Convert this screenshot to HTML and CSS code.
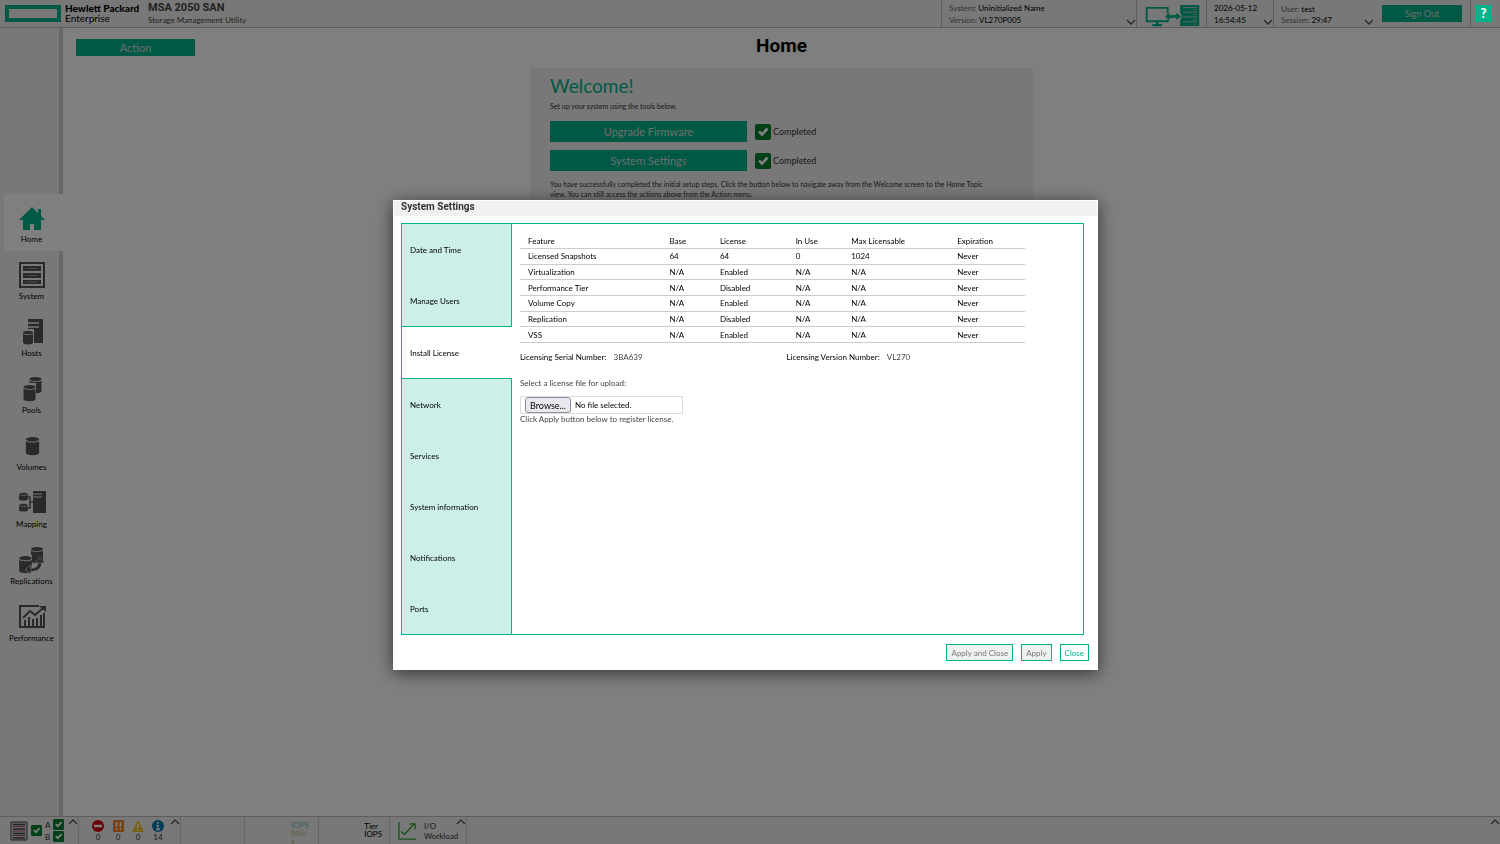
FILE: index.html
```
<!DOCTYPE html>
<html lang="en">

<head>
    <meta charset="UTF-8">
    <meta name="viewport" content="width=device-width, initial-scale=1.0">
    <title>MSA 2050 SAN - Storage Management Utility</title>
    <link rel="stylesheet" href="styles.css">
</head>

<body>
    <!-- shared icons -->
    <svg class="sprite" aria-hidden="true">
        <symbol id="check" viewBox="0 0 16 16">
            <rect width="16" height="16" rx="2" fill="#007f2e" />
            <path d="M4 7.500l3 3 5.500-6" fill="none" stroke="#fff" stroke-width="2.600" />
        </symbol>
        <symbol id="chev-down" viewBox="0 0 10 6">
            <path d="M1 1l4 4 4-4" fill="none" stroke="#555" stroke-width="1.400" />
        </symbol>
        <symbol id="chev-up" viewBox="0 0 10 6">
            <path d="M1 5l4-4 4 4" fill="none" stroke="#555" stroke-width="1.400" />
        </symbol>
        <symbol id="disk" viewBox="0 0 14 18">
            <path d="M1 4v11c0 3 12 3 12 0V4c0 2.500-12 2.500-12 0z" />
            <ellipse cx="7" cy="3" rx="6" ry="2" />
        </symbol>
    </svg>

    <header class="header">
        <svg class="logo" viewBox="0 0 56 17" aria-hidden="true">
            <rect x="2" y="2" width="52" height="13" fill="none" stroke="#00b388" stroke-width="4" />
        </svg>
        <div class="brand"><b>Hewlett Packard</b><span>Enterprise</span></div>
        <div class="product"><b>MSA 2050 SAN</b><span>Storage Management Utility</span></div>

        <div class="cell cell-system">
            <div class="line"><span>System:</span> Uninitialized Name</div>
            <div class="line"><span>Version:</span> VL270P005</div>
            <button class="chev" aria-label="System menu"><svg><use href="#chev-down" /></svg></button>
        </div>
        <div class="cell cell-link">
            <svg class="link-icon" viewBox="0 0 56 23" fill="none" stroke="#00b388">
                <path d="M1 3h22v14H1z" stroke-width="2" />
                <path d="M12 17v4M7 21h10" stroke-width="2.500" />
                <path d="M18 12h20" stroke="#f0f0f0" stroke-width="6" />
                <path d="M22 12h12" stroke-width="3" />
                <path d="M25 8l-5 4 5 4zM32 8l5 4-5 4z" fill="#00b388" stroke="none" />
                <path d="M36 0h20v22H36V16l2-4-2-4z" fill="#00b388" stroke="none" />
                <path d="M39 2.500h15M39 7.500h15M39 12.500h15M39 17.500h15" stroke="#c8c8c8" stroke-width="1" />
                <path d="M50 5h3M50 10h3M50 15h3M50 20h3" stroke="#c8c8c8" stroke-width="1" />
            </svg>
        </div>
        <div class="cell cell-time">
            <div class="line">2026-05-12</div>
            <div class="line">16:54:45</div>
            <button class="chev" aria-label="Date and time menu"><svg><use href="#chev-down" /></svg></button>
        </div>
        <div class="cell cell-user">
            <div class="user">
                <div class="line"><span>User:</span> test</div>
                <div class="line"><span>Session:</span> 29:47</div>
                <button class="chev" aria-label="User menu"><svg><use href="#chev-down" /></svg></button>
            </div>
            <button class="btn-sign-out">Sign Out</button>
        </div>
        <div class="cell cell-help"><button class="btn-help" aria-label="Help">?</button></div>
    </header>

    <div class="page">
        <nav class="sidebar">
            <a href="#home" class="active">
                <svg viewBox="0 0 28 28" class="home-icon"><path d="M14 3L1 16h4v10h7v-6h4v6h7V16h4l-4-4V5h-3v4z" /></svg>
                Home
            </a>
            <a href="#system">
                <svg viewBox="0 0 28 28">
                    <path d="M2 2h24v24H2z" fill="none" stroke="#555" stroke-width="2" />
                    <path d="M5 5h18v5H5zM5 12h18v5H5zM5 19h18v4H5z" />
                    <path d="M7 7.500h1M7 14.500h1M7 21h1M10 7.500h9M10 14.500h9M10 21h9" stroke="#999" />
                </svg>
                System
            </a>
            <a href="#hosts">
                <svg viewBox="0 0 28 28">
                    <path d="M10 1h15v24H10z" />
                    <path d="M10 5h11M10 9h11" stroke="#f0f0f0" stroke-width="1.500" />
                    <path d="M3 11h13v17H3z" fill="#f0f0f0" />
                    <use href="#disk" x="4" y="12" width="12" height="15" />
                </svg>
                Hosts
            </a>
            <a href="#pools">
                <svg viewBox="0 0 28 28">
                    <use href="#disk" x="10" y="1" width="15" height="18" />
                    <path d="M4 8h14v19H4z" fill="#f0f0f0" />
                    <use href="#disk" x="4" y="9" width="15" height="18" />
                </svg>
                Pools
            </a>
            <a href="#volumes">
                <svg viewBox="0 0 28 28"><use href="#disk" x="6" y="4" width="17" height="20" /></svg>
                Volumes
            </a>
            <a href="#mapping">
                <svg viewBox="0 0 28 28">
                    <path d="M1 5v5c0 2 9 2 9 0V5M1 16v5c0 2 9 2 9 0v-5" />
                    <path d="M1 5c0 2 9 2 9 0s-9-2-9 0zM1 16c0 2 9 2 9 0s-9-2-9 0z" stroke="#f0f0f0" stroke-width=".6" />
                    <path d="M15 2h13v22H15z" />
                    <path d="M15 5h9M15 8h9" stroke="#f0f0f0" />
                    <path d="M10 8h2v11h-2M12 13h4" fill="none" stroke="#555" stroke-width="1.500" />
                </svg>
                Mapping
            </a>
            <a href="#replications">
                <svg viewBox="0 0 28 28">
                    <use href="#disk" x="11" y="0" width="16" height="18" />
                    <path d="M1 9h13v18H1z" fill="#f0f0f0" />
                    <use href="#disk" x="0" y="9" width="15" height="19" />
                    <path d="M11 24c9 0 11-3 11-9" fill="none" stroke="#f0f0f0" stroke-width="5" />
                    <path d="M11 24c9 0 11-3 11-9" fill="none" stroke="#555" stroke-width="3" />
                    <path d="M7 24l6-5v9zM17 17l5-6 5 6z" stroke="#f0f0f0" stroke-width=".6" />
                </svg>
                Replications
            </a>
            <a href="#performance">
                <svg viewBox="0 0 28 28" fill="none" stroke="#555" stroke-width="2">
                    <path d="M21 3H2v21h24V10" fill="none" />
                    <path d="M5 15l7-7 5 4 8-7" fill="none" />
                    <path d="M21 3h7v6z" fill="#555" stroke="none" />
                    <path d="M7 17v6M11 14v9M15 16v7M19 15v8M23 12v11" />
                </svg>
                Performance
            </a>
        </nav>

        <main class="main">
            <button class="btn btn-menu">Action</button>
            <h1>Home</h1>
            <section class="welcome">
                <h2>Welcome!</h2>
                <p>Set up your system using the tools below.</p>
                <div class="step">
                    <button class="btn">Upgrade Firmware</button>
                    <svg><use href="#check" /></svg>
                    <span>Completed</span>
                </div>
                <div class="step">
                    <button class="btn">System Settings</button>
                    <svg><use href="#check" /></svg>
                    <span>Completed</span>
                </div>
                <p>You have successfully completed the initial setup steps. Click the button below to navigate away from the Welcome screen to the Home Topic view. You can still access the actions above from the Action menu.</p>
            </section>
        </main>
    </div>

    <footer class="footer">
        <div class="status health">
            <svg class="rack" viewBox="0 0 18 20">
                <path d="M1 1h16v18H1z" fill="#ccc" stroke="#444" />
                <path d="M3 3.500h12M3 8h12M3 12.500h12M3 17h12" stroke="#444" stroke-width="1.500" />
                <path d="M3 5.500h12M3 10h12M3 14.500h12" stroke="#a05068" />
            </svg>
            <svg class="check"><use href="#check" /></svg>
            <div class="controllers">
                <span>A</span><svg class="check"><use href="#check" /></svg>
                <span>B</span><svg class="check"><use href="#check" /></svg>
            </div>
            <button class="chev up" aria-label="Health details"><svg><use href="#chev-up" /></svg></button>
        </div>
        <div class="status events">
            <div><svg viewBox="0 0 12 12"><circle cx="6" cy="6" r="6" fill="#d00010" /><path d="M2 6h8" stroke="#fff" stroke-width="2.500" /></svg>0</div>
            <div><svg viewBox="0 0 12 12"><rect x="1" width="11" height="12" rx="1" fill="#f08020" /><path d="M4.500 2v5M8.500 2v5M4.500 8v2M8.500 8v2" stroke="#fff" stroke-width="1.500" /></svg>0</div>
            <div><svg viewBox="0 0 12 12"><path d="M6 0l6 12H0z" fill="#f0c020" /><path d="M6 4v4M6 9v2" stroke="#fff" stroke-width="1.500" /></svg>0</div>
            <div><svg viewBox="0 0 12 12"><circle cx="6" cy="6" r="6" fill="#0078b0" /><path d="M6 2v2M4.500 5.500H6V9M4 9.500h4" fill="none" stroke="#fff" stroke-width="1.500" /></svg>14</div>
            <button class="chev up" aria-label="Event details"><svg><use href="#chev-up" /></svg></button>
        </div>
        <div class="status blank"></div>
        <div class="status rates">
            <span class="iops">IOPS</span>
            <span class="mbs">MB/<br>s</span>
        </div>
        <div class="status tier"><span>Tier<br>IOPS</span></div>
        <div class="status workload">
            <svg class="chart" viewBox="0 0 20 20" fill="none" stroke="#30a030" stroke-width="1.400">
                <path d="M1 1v18h18M3 11l4 3L17 3M12 3h6v6" />
            </svg>
            <span>I/O<br>Workload</span>
            <button class="chev up" aria-label="Workload details"><svg><use href="#chev-up" /></svg></button>
        </div>
        <div class="status rest">
            <button class="chev up" aria-label="Activity"><svg><use href="#chev-up" /></svg></button>
        </div>
    </footer>

    <div class="overlay">
        <div class="dialog" role="dialog" aria-labelledby="dialog-title">
            <h3 id="dialog-title">System Settings</h3>
            <div class="panel">
                <div class="tabs" role="tablist">
                    <button role="tab">Date and Time</button>
                    <button role="tab">Manage Users</button>
                    <button role="tab" class="active" aria-selected="true">Install License</button>
                    <button role="tab">Network</button>
                    <button role="tab">Services</button>
                    <button role="tab">System information</button>
                    <button role="tab">Notifications</button>
                    <button role="tab">Ports</button>
                </div>
                <div class="content">
                    <table>
                        <colgroup>
                            <col class="c-feature"><col class="c-base"><col class="c-license"><col class="c-use"><col class="c-max"><col class="c-exp">
                        </colgroup>
                        <thead>
                            <tr><th>Feature</th><th>Base</th><th>License</th><th>In Use</th><th>Max Licensable</th><th>Expiration</th></tr>
                        </thead>
                        <tbody>
                            <tr><td>Licensed Snapshots</td><td>64</td><td>64</td><td>0</td><td>1024</td><td>Never</td></tr>
                            <tr><td>Virtualization</td><td>N/A</td><td>Enabled</td><td>N/A</td><td>N/A</td><td>Never</td></tr>
                            <tr><td>Performance Tier</td><td>N/A</td><td>Disabled</td><td>N/A</td><td>N/A</td><td>Never</td></tr>
                            <tr><td>Volume Copy</td><td>N/A</td><td>Enabled</td><td>N/A</td><td>N/A</td><td>Never</td></tr>
                            <tr><td>Replication</td><td>N/A</td><td>Disabled</td><td>N/A</td><td>N/A</td><td>Never</td></tr>
                            <tr><td>VSS</td><td>N/A</td><td>Enabled</td><td>N/A</td><td>N/A</td><td>Never</td></tr>
                        </tbody>
                    </table>
                    <div class="numbers">
                        <div>Licensing Serial Number: <span>3BA639</span></div>
                        <div>Licensing Version Number: <span>VL270</span></div>
                    </div>
                    <label class="hint" for="license">Select a license file for upload:</label>
                    <div class="file">
                        <input type="file" id="license" hidden onchange="showFile()">
                        <button type="button" onclick="license.click()">Browse...</button>
                        <span id="file-name">No file selected.</span>
                    </div>
                    <div class="hint">Click Apply button below to register license.</div>
                </div>
            </div>
            <div class="actions">
                <button disabled>Apply and Close</button>
                <button disabled>Apply</button>
                <button>Close</button>
            </div>
        </div>
    </div>

    <script>
        const license = document.getElementById('license');

        function showFile() {
            const file = license.files[0];
            document.getElementById('file-name').textContent = file ? file.name : 'No file selected.';
        }
    </script>
</body>

</html>
```
FILE: styles.css
```
* {
    box-sizing: border-box;
}

body {
    margin: 0;
    height: 100vh;
    display: flex;
    flex-direction: column;
    overflow: hidden;
    background: #fff;
    color: #000;
    font-family: Lato, "Open Sans", sans-serif;
    font-size: 8px;
}

button {
    font-family: inherit;
    cursor: pointer;
}

.sprite {
    display: none;
}

/* header */

.header {
    display: flex;
    height: 28px;
    background: #f0f0f0;
    border-bottom: 1px solid #bbb;
}

.logo {
    width: 56px;
    height: 17px;
    margin: 5px 4px 0 5px;
}

.brand,
.product {
    display: flex;
    flex-direction: column;
    white-space: nowrap;
}

.brand {
    width: 83px;
    padding-top: 3px;
    font-size: 10px;
    line-height: 10px;
}

.brand b {
    font-weight: 900;
}

.product {
    flex: 1;
    padding-top: 2px;
    color: #444;
    font-size: 8px;
    line-height: 12px;
}

.product b {
    font-family: Roboto, sans-serif;
    font-size: 11px;
}

.cell {
    position: relative;
    border-left: 1px solid #bbb;
    padding: 2px 7px;
    white-space: nowrap;
}

.line {
    line-height: 12px;
}

.line span {
    color: #666;
}

.cell-system {
    width: 195px;
}

.cell-link {
    width: 70px;
    padding: 5px 8px 0;
}

.link-icon {
    width: 55px;
    height: 22px;
}

.cell-time {
    width: 67px;
}

.cell-user {
    display: flex;
    width: 197px;
}

.user {
    position: relative;
    flex: 1;
    padding-top: 2px;
}

.user .line {
    line-height: 11px;
}

.chev {
    position: absolute;
    right: 0;
    bottom: 2px;
    width: 10px;
    height: 6px;
    padding: 0;
    border: none;
    background: none;
}

.chev svg {
    display: block;
    width: 10px;
    height: 6px;
}

.user .chev {
    right: 8px;
    bottom: 0;
}

.chev.up {
    top: 2px;
    right: 0;
}

.btn-sign-out {
    width: 80px;
    height: 17px;
    margin: 3px 1px 0 0;
    border: none;
    background: #00b388;
    color: #ddd;
    font-size: 9px;
}

.cell-help {
    width: 30px;
    padding: 5px 0 0 4px;
}

/* help stays usable while a dialog is open */
.btn-help {
    position: relative;
    z-index: 20;
    display: block;
    width: 17px;
    height: 17px;
    padding: 0;
    border: none;
    background: #00b388;
    color: #fff;
    font-size: 13px;
    font-weight: 900;
    line-height: 17px;
}

/* page */

.page {
    flex: 1;
    display: flex;
    min-height: 0;
}

.sidebar {
    display: flex;
    flex-direction: column;
    justify-content: center;
    width: 63px;
    padding-left: 4px;
    background: #f0f0f0;
    border-right: 4px solid #d0d0d0;
}

.sidebar a {
    display: flex;
    flex-direction: column;
    align-items: center;
    height: 57px;
    padding-top: 10px;
    color: #000;
    line-height: 12px;
    text-decoration: none;
}

.sidebar .active {
    margin-right: -4px;
    padding-right: 4px;
    background: #fff;
}

.sidebar svg {
    width: 28px;
    height: 28px;
    fill: #555;
    margin-bottom: 1px;
}

.sidebar .home-icon {
    fill: #00b388;
}

.main {
    flex: 1;
    position: relative;
}

.btn {
    border: none;
    background: #00b388;
    color: #ddd;
    font-size: 11px;
}

.btn-menu {
    position: absolute;
    left: 13px;
    top: 11px;
    width: 119px;
    height: 17px;
    padding: 0;
}

.main h1 {
    margin: 6px 0 10px;
    font-family: Roboto, sans-serif;
    font-size: 19px;
    line-height: 24px;
    text-align: center;
}

.welcome {
    width: 35%;
    height: 300px;
    margin: 0 auto;
    padding: 6px 40px 0 20px;
    background: #f0f0f0;
    color: #333;
}

.welcome h2 {
    margin: 0;
    color: #00b388;
    font-size: 19px;
    font-weight: 400;
    line-height: 24px;
}

.welcome p {
    margin: 3px 0 10px;
    font-size: 7px;
    line-height: 10px;
}

.step {
    display: flex;
    align-items: center;
    margin-bottom: 8px;
    font-size: 9px;
}

.step .btn {
    width: 197px;
    height: 21px;
    margin-right: 8px;
}

.step svg {
    width: 16px;
    height: 16px;
    margin-right: 2px;
}

/* footer */

.footer {
    display: flex;
    height: 28px;
    background: #f0f0f0;
    border-top: 1px solid #bbb;
    color: #333;
}

.status {
    position: relative;
    border-right: 1px solid #ccc;
}

.health {
    display: flex;
    align-items: center;
    gap: 3px;
    width: 79px;
    padding-left: 10px;
}

.rack {
    width: 18px;
    height: 20px;
}

.check {
    width: 11px;
    height: 11px;
}

.controllers {
    display: grid;
    grid-template-columns: 8px 11px;
    row-gap: 1px;
    align-items: center;
}

.events {
    display: flex;
    gap: 8px;
    width: 102px;
    padding: 3px 0 0 13px;
}

.events div {
    width: 12px;
    text-align: center;
    line-height: 8px;
}

.events div svg {
    display: block;
    width: 12px;
    height: 12px;
    margin-bottom: 1px;
}

.blank {
    width: 64px;
}

.rates {
    width: 74px;
    padding: 4px 0 0 46px;
    line-height: 8px;
}

.rates span {
    display: block;
}

.iops {
    color: #80c0c8;
}

.mbs {
    color: #b0c880;
}

.tier {
    display: flex;
    justify-content: flex-end;
    width: 71px;
    padding: 5px 7px 0 0;
    color: #000;
    line-height: 8px;
}

.workload {
    display: flex;
    gap: 7px;
    width: 77px;
    padding: 4px 0 0 8px;
    line-height: 10px;
}

.chart {
    width: 19px;
    height: 19px;
}

.rest {
    flex: 1;
    border-right: none;
}

/* dialog */

.overlay {
    position: fixed;
    inset: 0;
    z-index: 10;
    display: flex;
    align-items: center;
    justify-content: center;
    padding: 26px 9px 0 0;
    background: rgba(0, 0, 0, 0.5);
}

.dialog {
    width: 47vw;
    border: 1px solid #fff;
    background: #fff;
    box-shadow: 0 3px 16px rgba(0, 0, 0, 0.6);
}

.dialog h3 {
    margin: 0;
    padding: 0 7px 4px;
    background: #f0f0f0;
    color: #333;
    font-family: Roboto, sans-serif;
    font-size: 10px;
    line-height: 11px;
}

.panel {
    display: flex;
    margin: 7px 13px 9px 7px;
    border: 1px solid #00b388;
}

.tabs {
    display: flex;
    flex-direction: column;
    width: 110px;
}

.tabs button {
    height: 51px;
    padding: 0 8px;
    border: none;
    border-right: 1px solid #00b388;
    background: #ccf0e7;
    color: #000;
    font-size: 8px;
    text-align: left;
}

.tabs .active {
    height: 53px;
    border: solid #00b388;
    border-width: 1px 0;
    background: #fff;
}

.content {
    flex: 1;
    padding: 10px 8px;
}

.content table {
    width: 91%;
    height: 109px;
    margin-bottom: 9px;
    table-layout: fixed;
    border-spacing: 0;
}

.content th,
.content td {
    padding: 0 8px;
    border-bottom: 1px solid #ccc;
    font-weight: 400;
    line-height: 14px;
    text-align: left;
}

.c-feature {
    width: 28%;
}

.c-base {
    width: 10%;
}

.c-license,
.c-exp {
    width: 15%;
}

.c-use {
    width: 11%;
}

.c-max {
    width: 21%;
}

.numbers {
    display: grid;
    grid-template-columns: 48% 52%;
    margin-bottom: 16px;
    line-height: 10px;
}

.numbers span {
    margin-left: 5px;
    color: #444;
}

.hint {
    display: block;
    color: #444;
    line-height: 10px;
}

.file {
    display: flex;
    align-items: center;
    gap: 4px;
    width: 163px;
    height: 18px;
    margin: 8px 0 0;
    padding-left: 4px;
    border: 1px solid #ddd;
}

.file button {
    width: 46px;
    height: 16px;
    padding: 0;
    border: 1px solid #8f8f9d;
    border-radius: 3px;
    background: #e9e9ed;
    font-size: 9px;
}

.actions {
    display: flex;
    justify-content: flex-end;
    gap: 8px;
    padding: 0 8px 8px;
}

.actions button {
    height: 17px;
    padding: 0 4px;
    border: 1px solid #00b388;
    background: #fff;
    color: #00b388;
    font-size: 8px;
}

.actions button:disabled {
    background: #f0f0f0;
    color: #777;
}
```
